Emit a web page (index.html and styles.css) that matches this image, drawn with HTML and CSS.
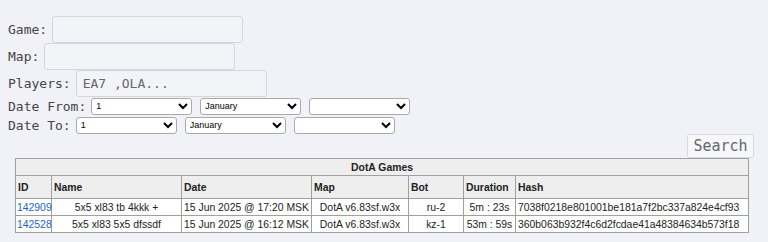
FILE: index.html
```html
<!DOCTYPE html>
<html>
<head>
<meta charset="utf-8">
<link rel="stylesheet" href="styles.css">
</head>
<body>
<form class="search">
  <div class="row row-game"><label class="lbl">Game:</label><input class="txt" type="text"></div>
  <div class="row row-map"><label class="lbl">Map:</label><input class="txt" type="text"></div>
  <div class="row row-players"><label class="lbl">Players:</label><input class="txt" type="text" placeholder="EA7 ,OLA..."></div>
  <div class="row row-date"><label class="lbl">Date From:</label><select class="sel"><option>1</option></select><select class="sel"><option>January</option></select><select class="sel"><option></option></select></div>
  <div class="row row-date row-to"><label class="lbl">Date To:</label><select class="sel"><option>1</option></select><select class="sel"><option>January</option></select><select class="sel"><option></option></select></div>
  <div class="actions"><button type="button" class="btn">Search</button></div>
</form>
<table class="games">
  <colgroup><col class="w-id"><col class="w-name"><col class="w-date"><col class="w-map"><col class="w-bot"><col class="w-dur"><col class="w-hash"></colgroup>
  <tr><th class="cap" colspan="7">DotA Games</th></tr>
  <tr class="head"><th>ID</th><th>Name</th><th>Date</th><th>Map</th><th>Bot</th><th>Duration</th><th>Hash</th></tr>
  <tr><td class="id"><a href="#">142909</a></td><td class="c">5x5 xl83 tb 4kkk +</td><td>15 Jun 2025 @ 17:20 MSK</td><td class="c">DotA v6.83sf.w3x</td><td class="c">ru-2</td><td class="c">5m : 23s</td><td>7038f0218e801001be181a7f2bc337a824e4cf93</td></tr>
  <tr><td class="id"><a href="#">142528</a></td><td class="c">5x5 xl83 5x5 dfssdf</td><td>15 Jun 2025 @ 16:12 MSK</td><td class="c">DotA v6.83sf.w3x</td><td class="c">kz-1</td><td class="c">53m : 59s</td><td>360b063b932f4c6d2fcdae41a48384634b573f18</td></tr>
</table>
</body>
</html>
```
FILE: styles.css
```css
html, body { margin: 0; padding: 0; }
body {
  background: #f1f2f7;
  font-family: "DejaVu Sans Mono", monospace;
  font-size: 13px;
  color: #333;
  padding: 16px 14px 0 8px;
}
.search { margin: 0; }
.row { display: flex; align-items: center; }
.lbl { color: #444; margin-right: 5px; }
.txt {
  box-sizing: border-box;
  width: 191px;
  height: 27px;
  border: 1px solid #d4d6dc;
  border-radius: 3px;
  background: #f3f4f8;
  font-family: "DejaVu Sans Mono", monospace;
  font-size: 13px;
  color: #555;
  padding: 0 6px;
  margin: 0;
}
.txt::placeholder { color: #666; }
.row-game, .row-map, .row-players { height: 27px; }
.row-date { height: 18px; }
.row-to { margin-top: 1px; }
.sel {
  box-sizing: border-box;
  width: 101px;
  height: 17px;
  font-family: "Liberation Sans", Arial, sans-serif;
  font-size: 9px;
  margin: 0 8px 0 0;
  background: #fff;
  border: 1px solid #aaa;
  border-radius: 3px;
  color: #000;
}
.actions { display: flex; justify-content: flex-end; }
.btn {
  box-sizing: border-box;
  width: 67px;
  height: 24px;
  border: 1px solid #d8dadf;
  border-radius: 2px;
  background: #f6f7fa;
  font-family: "DejaVu Sans Mono", monospace;
  font-size: 15px;
  color: #666;
  padding: 0;
}
.games {
  border-collapse: collapse;
  table-layout: fixed;
  margin-left: 7px;
  width: 733px;
  font-family: "Liberation Sans", Arial, sans-serif;
  font-size: 10.4px;
  background: #fff;
  border: 1px solid #999;
}
.w-id { width: 36px; }
.w-name { width: 130px; }
.w-date { width: 130px; }
.w-map { width: 97px; }
.w-bot { width: 55px; }
.w-dur { width: 52px; }
.w-hash { width: 233px; }
.games th, .games td { border: 1px solid #a0a0a0; padding: 0 2px; white-space: nowrap; }
.games th { background: #eeeeee; text-align: left; font-size: 10.4px; color: #222; }
.games th.cap { text-align: center; height: 16px; }
.games tr.head th { height: 22px; }
.games td { height: 16px; color: #222; }
.games td.c { text-align: center; }
.games td.id { padding: 0 1px; }
.games a { color: #1a66cc; text-decoration: none; }
```
